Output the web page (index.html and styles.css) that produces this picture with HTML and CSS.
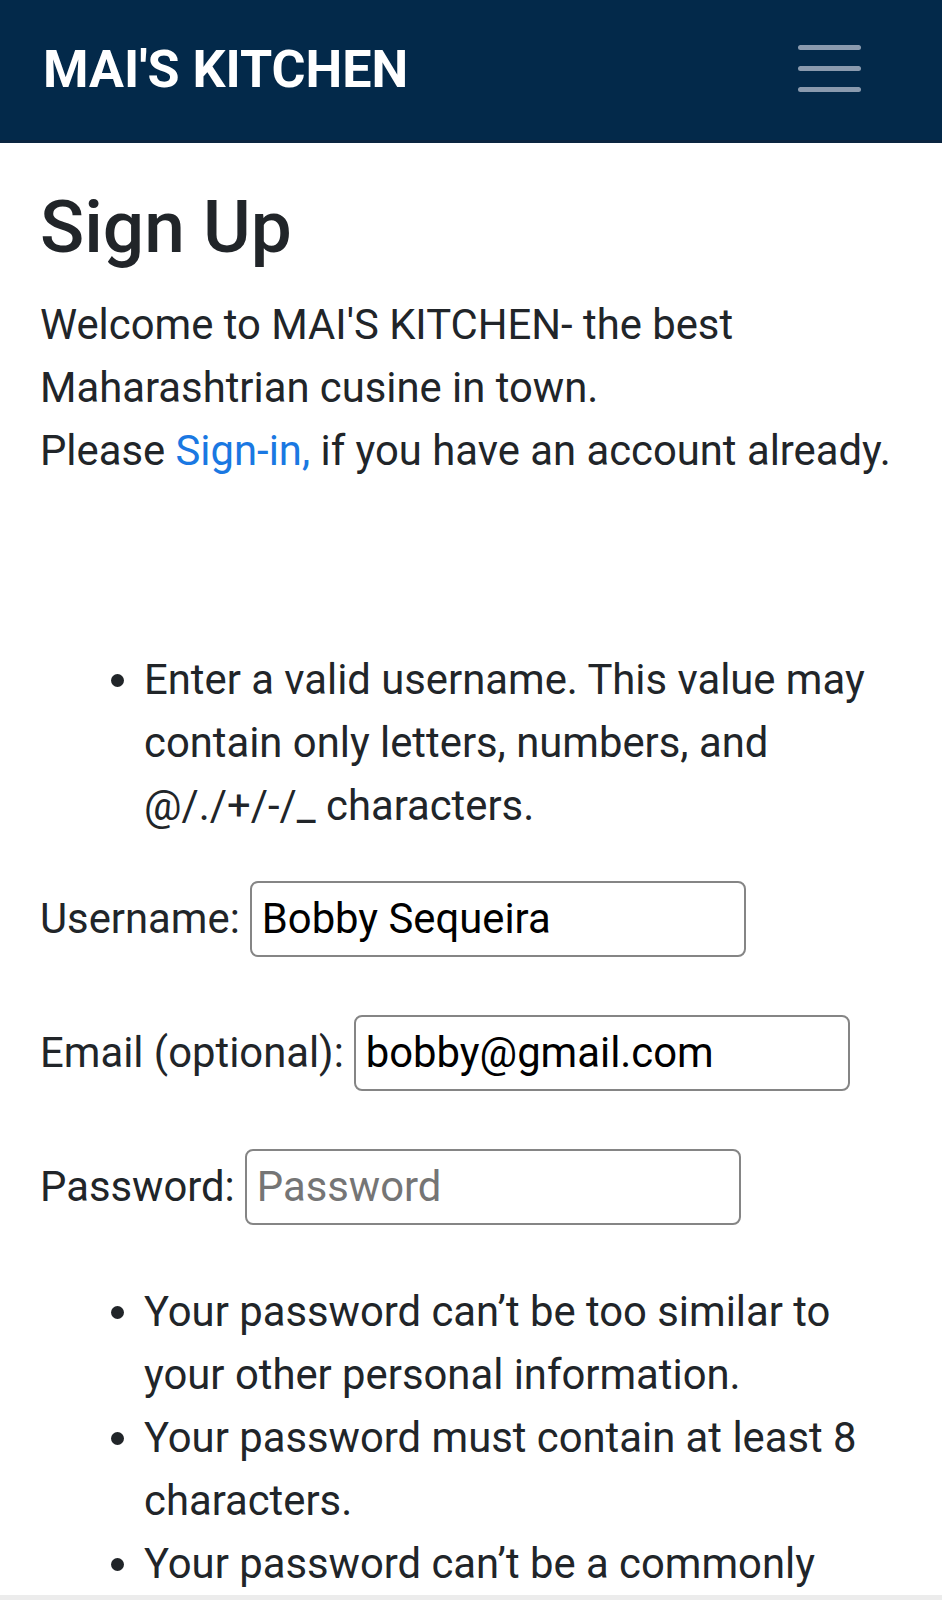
FILE: index.html
```html
<!DOCTYPE html>
<html lang="en">
<head>
<meta charset="utf-8">
<title>Sign Up - MAI'S KITCHEN</title>
<link rel="stylesheet" href="styles.css">
</head>
<body>
<nav class="navbar">
  <a class="brand" href="#">MAI'S KITCHEN</a>
  <button class="toggler" type="button" aria-label="Toggle navigation">
    <span class="bar"></span>
    <span class="bar"></span>
    <span class="bar"></span>
  </button>
</nav>
<main class="container">
  <h1 class="title">Sign Up</h1>
  <p class="intro">Welcome to MAI'S KITCHEN- the best Maharashtrian cusine in town.<br>Please <a class="link" href="#">Sign-in,</a> if you have an account already.</p>
  <form class="form">
    <ul class="errorlist">
      <li>Enter a valid username. This value may contain only letters, numbers, and @/./+/-/_ characters.</li>
    </ul>
    <div class="field field-gap">
      <label class="label" for="id_username">Username:</label>
      <input class="input" id="id_username" type="text" value="Bobby Sequeira">
    </div>
    <div class="field field-gap">
      <label class="label" for="id_email">Email (optional):</label>
      <input class="input" id="id_email" type="email" value="bobby@gmail.com">
    </div>
    <div class="field">
      <label class="label" for="id_password1">Password:</label>
      <input class="input" id="id_password1" type="password" placeholder="Password">
    </div>
    <ul class="helplist">
      <li>Your password can’t be too similar to your other personal information.</li>
      <li>Your password must contain at least 8 characters.</li>
      <li>Your password can’t be a commonly used password.</li>
      <li>Your password can’t be entirely numeric.</li>
    </ul>
  </form>
</main>
<div class="screen-edge"></div>
</body>
</html>
```
FILE: styles.css
```css
html, body {
  margin: 0;
  padding: 0;
  background: #ffffff;
}
body {
  font-family: Roboto, "Liberation Sans", Arial, sans-serif;
  font-size: 41.8px;
  line-height: 63px;
  color: #212529;
}
.navbar {
  display: flex;
  align-items: center;
  justify-content: space-between;
  height: 143px;
  box-sizing: border-box;
  padding: 0 81px 0 43px;
  background: #03294a;
  border-bottom: 3px solid #0a2540;
}
.brand {
  font-size: 52px;
  font-weight: 700;
  line-height: 1;
  color: #ffffff;
  text-decoration: none;
}
.toggler {
  display: flex;
  flex-direction: column;
  gap: 16px;
  padding: 0;
  margin: -3px 0 0;
  border: 0;
  background: transparent;
}
.bar {
  display: block;
  width: 63px;
  height: 5px;
  border-radius: 3px;
  background: #8a9aae;
}
.container {
  padding: 0 40px;
}
.title {
  margin: 41px 0 21px;
  font-size: 73px;
  font-weight: 500;
  line-height: 1.2;
  color: #212529;
}
.intro {
  margin: 0 0 166px;
}
.link {
  color: #1a78e2;
  text-decoration: none;
}
.form {
  margin: 0;
}
.errorlist,
.helplist {
  margin: 0;
  padding-left: 104px;
}
.errorlist {
  margin-bottom: 44px;
}
.helplist {
  margin-top: 55px;
}
.field {
  display: flex;
  align-items: center;
  gap: 10px;
  height: 76px;
}
.field-gap {
  margin-bottom: 58px;
}
.label {
  white-space: nowrap;
}
.input {
  box-sizing: border-box;
  width: 496px;
  height: 76px;
  margin: 0;
  padding: 0 10px;
  border: 2px solid #858585;
  border-radius: 8px;
  font-family: Roboto, "Liberation Sans", Arial, sans-serif;
  font-size: 41.8px;
  color: #000000;
  background: #ffffff;
  outline: none;
}
.input::placeholder {
  color: #757575;
}
.screen-edge {
  position: fixed;
  left: 0;
  right: 0;
  bottom: 0;
  height: 5px;
  background: #ececec;
}
```
